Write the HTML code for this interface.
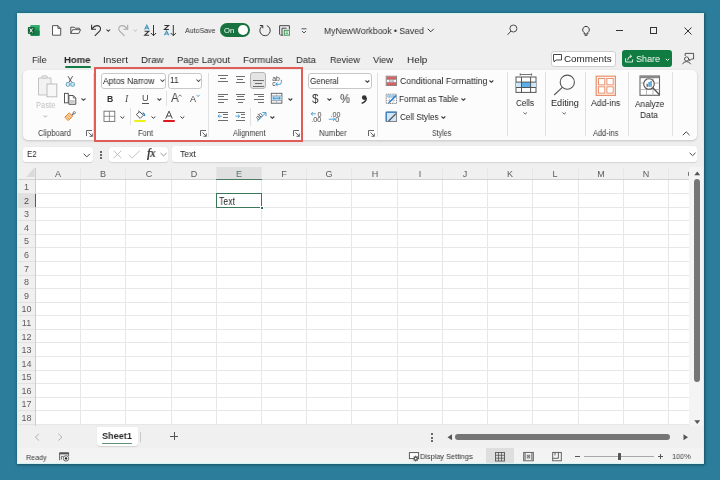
<!DOCTYPE html>
<html><head><meta charset="utf-8"><style>
html,body{margin:0;padding:0;}
body{width:720px;height:480px;overflow:hidden;position:relative;background:#2c7c9b;font-family:"Liberation Sans",sans-serif;}
.a{position:absolute;}
.t{line-height:1;white-space:nowrap;will-change:transform;}
svg{overflow:visible;will-change:transform;}
</style></head><body>
<div class="a" style="left:17.00px;top:13.00px;width:687.00px;height:450.50px;background:#efefef;box-shadow:0.5px 0.5px 2.5px 0.5px rgba(10,45,45,.55);"></div>
<div class="a" style="left:17.00px;top:13.00px;width:687.00px;height:450.50px;box-shadow: inset 0 0 0 1px #d4f3f0;background:transparent;z-index:5;"></div>
<svg class="a" style="left:25px;top:22px" width="20" height="18" viewBox="25 22 20 18"><rect x="30.5" y="24.9" width="9.1" height="10.9" rx="1" fill="#1f9a58"/><rect x="30.5" y="30.4" width="9.1" height="5.4" rx="0.5" fill="#138048"/><rect x="30.5" y="24.9" width="9.1" height="2.6" rx="1" fill="#33b070"/><rect x="27.9" y="27" width="6.6" height="6.9" rx="0.8" fill="#17633a"/><path d="M29.7 28.4 L32.6 32.5 M32.6 28.4 L29.7 32.5" stroke="#fff" stroke-width="0.95"/></svg>
<svg class="a" style="left:45px;top:22px" width="43" height="18" viewBox="45 22 43 18"><path d="M52.5 25.6 H57.9 L60.7 28.4 V35.2 H52.5 Z M57.9 25.6 V28.4 H60.7" fill="#fff" stroke="#444" stroke-width="0.9" stroke-linejoin="round"/></svg>
<svg class="a" style="left:45px;top:22px" width="43" height="18" viewBox="45 22 43 18"><path d="M70.8 33.4 V27.2 H74.2 L75.2 28.2 H79.4 V29.6" fill="none" stroke="#444" stroke-width="0.9" stroke-linejoin="round"/><path d="M70.8 33.4 L72.6 29.7 H80.6 L78.8 33.4 Z" fill="#fff" stroke="#444" stroke-width="0.9" stroke-linejoin="round"/></svg>
<svg class="a" style="left:88px;top:22px" width="52" height="18" viewBox="88 22 52 18"><path d="M91.6 24.8 V29.3 H96" fill="none" stroke="#333" stroke-width="1.1"/><path d="M91.9 28.9 Q95.5 24.3 99.3 26.2 Q101.6 28.6 99.6 31.2 L94.8 35.8" fill="none" stroke="#333" stroke-width="1.1"/></svg>
<svg class="a" style="left:105.70px;top:28.60px" width="4.6" height="2.8" viewBox="0 0 4.6 2.8"><path d="M0.5 0.5 L2.3 2.3 L4.1 0.5" fill="none" stroke="#333" stroke-width="1.05"/></svg>
<svg class="a" style="left:88px;top:22px" width="52" height="18" viewBox="88 22 52 18"><path d="M127.7 24.8 V29.3 H123.3" fill="none" stroke="#aaa" stroke-width="1.1"/><path d="M127.4 28.9 Q123.8 24.3 120 26.2 Q117.7 28.6 119.7 31.2 L124.5 35.8" fill="none" stroke="#aaa" stroke-width="1.1"/></svg>
<svg class="a" style="left:132.50px;top:28.60px" width="4.5" height="2.8" viewBox="0 0 4.5 2.8"><path d="M0.5 0.5 L2.25 2.3 L4.0 0.5" fill="none" stroke="#ccc" stroke-width="1.05"/></svg>
<svg class="a" style="left:140px;top:20px" width="40" height="20" viewBox="140 20 40 20"><path d="M144.6 29.5 L146.8 25.1 L149.0 29.5 M145.4 28.1 H148.20000000000002" fill="none" stroke="#3f95bd" stroke-width="1.05"/><path d="M144.6 31.2 H148.9 L144.6 35.3 H149.1" fill="none" stroke="#333" stroke-width="1.05"/><path d="M153.5 25 V35.6 M150.9 33 L153.5 35.7 L156.1 33" fill="none" stroke="#333" stroke-width="1"/></svg>
<svg class="a" style="left:140px;top:20px" width="40" height="20" viewBox="140 20 40 20"><path d="M164.39999999999998 35.3 L166.6 30.9 L168.79999999999998 35.3 M165.2 33.9 H168.0" fill="none" stroke="#3f95bd" stroke-width="1.05"/><path d="M164.39999999999998 25.400000000000002 H168.7 L164.39999999999998 29.5 H168.89999999999998" fill="none" stroke="#333" stroke-width="1.05"/><path d="M173.29999999999998 25 V35.6 M170.7 33 L173.29999999999998 35.7 L175.89999999999998 33" fill="none" stroke="#333" stroke-width="1"/></svg>
<div class="a t" style="left:184.90px;top:27.47px;font-size:7.74px;color:#333;font-weight:normal;transform:scaleX(0.9097);transform-origin:0 0;">AutoSave</div>
<div class="a" style="left:219.80px;top:23.10px;width:30.00px;height:13.70px;background:#17723f;border-radius:7px;"></div>
<div class="a t" style="left:224.37px;top:27.02px;font-size:7.63px;color:#fff;font-weight:normal;transform:scaleX(0.9680);transform-origin:0 0;">On</div>
<div class="a" style="left:238.00px;top:25.30px;width:9.90px;height:9.90px;background:#fff;border-radius:50%;"></div>
<svg class="a" style="left:255px;top:22px" width="20" height="18" viewBox="255 22 20 18"><path d="M262.6 25.9 A5.2 5.2 0 1 0 266.8 25.6" fill="none" stroke="#3a3a3a" stroke-width="1"/><path d="M259.8 25.5 H262.8 V28.3" fill="none" stroke="#3a3a3a" stroke-width="1"/></svg>
<svg class="a" style="left:275px;top:22px" width="20" height="18" viewBox="275 22 20 18"><path d="M279.6 25.7 H289.4 V29.5 M279.6 25.7 V34.2 L280.6 35.2 H283.2 M282 35 V28.2 H286.6" fill="none" stroke="#444" stroke-width="1"/><rect x="284.3" y="30.3" width="5.1" height="4.9" fill="#e9f5ec" stroke="#3a9a55" stroke-width="1"/><path d="M285.6 32 H288 M285.6 33.6 H288" stroke="#3a9a55" stroke-width="0.8"/></svg>
<svg class="a" style="left:301.00px;top:28.00px" width="6" height="6" viewBox="0 0 6 6"><path d="M0.5 0.8 H5.5 M1 3 L3 5 L5 3" fill="none" stroke="#444" stroke-width="0.9"/></svg>
<div class="a t" style="left:323.71px;top:26.78px;font-size:9.33px;color:#303030;font-weight:normal;transform:scaleX(0.9264);transform-origin:0 0;">MyNewWorkbook &bull; Saved</div>
<svg class="a" style="left:427.00px;top:28.00px" width="8" height="5" viewBox="0 0 8 5"><path d="M0.8 0.8 L3.8 3.8 L6.8 0.8" fill="none" stroke="#333" stroke-width="1"/></svg>
<svg class="a" style="left:500px;top:20px" width="25" height="20" viewBox="500 20 25 20"><circle cx="513.4" cy="28.5" r="3.5" fill="none" stroke="#444" stroke-width="0.95"/><path d="M511 31 L507.6 34.8" stroke="#444" stroke-width="1"/></svg>
<svg class="a" style="left:582.00px;top:26.00px" width="8" height="10" viewBox="0 0 8 10"><path d="M2.2 6.5 A3.3 3.3 0 1 1 5.8 6.5 V8 H2.2 Z M2.7 9.3 H5.3" fill="none" stroke="#333" stroke-width="1"/></svg>
<div class="a" style="left:616.30px;top:30.00px;width:6.60px;height:1.00px;background:#333;"></div>
<div class="a" style="left:649.80px;top:27.00px;width:7.40px;height:7.20px;border:1px solid #333;box-sizing:border-box;"></div>
<svg class="a" style="left:683.50px;top:26.50px" width="8" height="8" viewBox="0 0 8 8"><path d="M0.5 0.5 L7.5 7.5 M7.5 0.5 L0.5 7.5" stroke="#333" stroke-width="1"/></svg>
<div class="a t" style="left:31.78px;top:54.92px;font-size:9.86px;color:#262626;font-weight:normal;transform:scaleX(0.9154);transform-origin:0 0;">File</div>
<div class="a t" style="left:64.38px;top:54.92px;font-size:9.86px;color:#262626;font-weight:bold;transform:scaleX(0.9708);transform-origin:0 0;">Home</div>
<div class="a t" style="left:102.90px;top:54.92px;font-size:9.86px;color:#262626;font-weight:normal;transform:scaleX(1.0123);transform-origin:0 0;">Insert</div>
<div class="a t" style="left:140.83px;top:54.92px;font-size:9.86px;color:#262626;font-weight:normal;transform:scaleX(0.9762);transform-origin:0 0;">Draw</div>
<div class="a t" style="left:176.54px;top:54.92px;font-size:9.86px;color:#262626;font-weight:normal;transform:scaleX(0.9594);transform-origin:0 0;">Page Layout</div>
<div class="a t" style="left:242.53px;top:54.92px;font-size:9.86px;color:#262626;font-weight:normal;transform:scaleX(0.9731);transform-origin:0 0;">Formulas</div>
<div class="a t" style="left:295.64px;top:54.92px;font-size:9.86px;color:#262626;font-weight:normal;transform:scaleX(0.9594);transform-origin:0 0;">Data</div>
<div class="a t" style="left:329.57px;top:54.92px;font-size:9.86px;color:#262626;font-weight:normal;transform:scaleX(0.9225);transform-origin:0 0;">Review</div>
<div class="a t" style="left:373.25px;top:54.92px;font-size:9.86px;color:#262626;font-weight:normal;transform:scaleX(0.9458);transform-origin:0 0;">View</div>
<div class="a t" style="left:406.71px;top:54.92px;font-size:9.86px;color:#262626;font-weight:normal;transform:scaleX(1.0065);transform-origin:0 0;">Help</div>
<div class="a" style="left:65.00px;top:65.80px;width:25.80px;height:1.80px;background:#107c41;border-radius:1px;"></div>
<div class="a" style="left:550.50px;top:50.80px;width:65.00px;height:16.00px;background:#fff;border:1px solid #d0d0d0;border-radius:3px;box-sizing:border-box;"></div>
<svg class="a" style="left:553.00px;top:54.00px" width="9" height="9" viewBox="0 0 9 9"><path d="M0.5 0.5 H8.5 V6 H3 L1 8 V6 H0.5 Z" fill="none" stroke="#333" stroke-width="0.9"/></svg>
<div class="a t" style="left:564.31px;top:53.72px;font-size:9.86px;color:#262626;font-weight:normal;transform:scaleX(0.9930);transform-origin:0 0;">Comments</div>
<div class="a" style="left:622.00px;top:50.20px;width:50.00px;height:16.50px;background:#107c41;border-radius:3px;"></div>
<svg class="a" style="left:620px;top:48px" width="80" height="22" viewBox="620 48 80 22"><path d="M625.6 58.2 V62 H632.6 V59.4" fill="none" stroke="#e6f2ea" stroke-width="0.95"/><path d="M627.6 60.2 Q627.8 56.6 631.4 56.2 M629.8 54.6 L631.6 56.2 L630 57.9" fill="none" stroke="#e6f2ea" stroke-width="0.95"/></svg>
<div class="a t" style="left:636.29px;top:53.72px;font-size:9.86px;color:#fff;font-weight:normal;transform:scaleX(0.9179);transform-origin:0 0;">Share</div>
<svg class="a" style="left:664.50px;top:57.60px" width="6" height="4" viewBox="0 0 6 4"><path d="M0.8 0.8 L2.5 2.5 L4.2 0.8" fill="none" stroke="#fff" stroke-width="0.9"/></svg>
<svg class="a" style="left:678px;top:50px" width="20" height="18" viewBox="678 50 20 18"><path d="M685.2 56 V53.4 H693.6 V59 H691.4 L689.6 60.8 V59" fill="none" stroke="#444" stroke-width="0.9"/><circle cx="686.6" cy="59" r="2.1" fill="#f0f0f0" stroke="#444" stroke-width="0.9"/><path d="M682.6 64.2 Q683.2 61.6 686.6 61.6 Q689.8 61.6 690.6 64.2" fill="none" stroke="#444" stroke-width="0.9"/></svg>
<div class="a" style="left:23.20px;top:70.00px;width:674.30px;height:69.80px;background:#fcfcfc;border-radius:5px;box-shadow:0 1px 2.5px rgba(0,0,0,.18);"></div>
<svg class="a" style="left:37.00px;top:75.00px" width="21" height="23" viewBox="0 0 21 23"><path d="M1.5 3 H5 V1.5 H10 V3 H14 V20 H1.5 Z" fill="#f2f2f2" stroke="#c4c4c4" stroke-width="1"/><rect x="5" y="0.8" width="5" height="2.6" rx="1" fill="#e8e8e8" stroke="#c4c4c4" stroke-width="0.9"/><rect x="10" y="9" width="9.8" height="12.8" fill="#f7f7f7" stroke="#bdbdbd" stroke-width="1"/></svg>
<div class="a t" style="left:35.99px;top:101.09px;font-size:9.12px;color:#c2c2c2;font-weight:normal;transform:scaleX(0.8306);transform-origin:0 0;">Paste</div>
<svg class="a" style="left:42.90px;top:114.70px" width="4.6" height="2.6" viewBox="0 0 4.6 2.6"><path d="M0.5 0.5 L2.3 2.1 L4.1 0.5" fill="none" stroke="#c8c8c8" stroke-width="1.05"/></svg>
<svg class="a" style="left:60px;top:72px" width="30" height="52" viewBox="60 72 30 52"><path d="M68 76.2 L71.6 82.2 M72.6 76.2 L69 82.2" stroke="#555" stroke-width="1" fill="none"/><circle cx="68" cy="84.4" r="1.9" fill="#d7ebf2" stroke="#6aaac2" stroke-width="1.1"/><circle cx="72.6" cy="84.4" r="1.9" fill="#d7ebf2" stroke="#6aaac2" stroke-width="1.1"/></svg>
<svg class="a" style="left:60px;top:72px" width="30" height="52" viewBox="60 72 30 52"><rect x="64.5" y="93.4" width="3.8" height="9.4" fill="#fff" stroke="#555" stroke-width="1"/><path d="M68.9 95.5 H73.3 L75.8 98 V104.3 H68.9 Z" fill="#fff" stroke="#555" stroke-width="1"/><rect x="70" y="100" width="4.8" height="3.6" fill="#c9c9c9"/><path d="M73.3 95.5 V98 H75.8" fill="none" stroke="#555" stroke-width="0.8"/></svg>
<svg class="a" style="left:80.60px;top:97.60px" width="5" height="2.8" viewBox="0 0 5 2.8"><path d="M0.5 0.5 L2.5 2.3 L4.5 0.5" fill="none" stroke="#444" stroke-width="1.05"/></svg>
<svg class="a" style="left:60px;top:72px" width="30" height="52" viewBox="60 72 30 52"><path d="M71.5 115.5 L75 112" stroke="#666" stroke-width="1.2"/><circle cx="74.3" cy="112.7" r="1.1" fill="#fff" stroke="#666" stroke-width="0.8"/><path d="M64.8 117.2 L69.2 112.8 L72.6 116.2 L68.2 120.6 Z" fill="#fbd3a3" stroke="#e8862c" stroke-width="1"/><path d="M66.5 116.5 L69.5 119.5 M68 114.8 L71 117.8" stroke="#e8862c" stroke-width="0.7"/></svg>
<div class="a t" style="left:37.62px;top:130.21px;font-size:8.27px;color:#3a3a3a;font-weight:normal;transform:scaleX(0.9293);transform-origin:0 0;">Clipboard</div>
<svg class="a" style="left:86.20px;top:129.80px" width="7" height="7" viewBox="0 0 7 7"><path d="M0.5 6 V0.5 H6 M2.5 2.5 L6.3 6.3 M6.3 3.5 V6.3 H3.5" fill="none" stroke="#555" stroke-width="0.9"/></svg>
<div class="a" style="left:92.50px;top:73.00px;width:1.00px;height:64.00px;background:#e1e1e1;"></div>
<div class="a" style="left:101.30px;top:72.70px;width:65.00px;height:16.10px;background:#fff;border:1px solid #c8c8c8;border-radius:3px;box-sizing:border-box;"></div>
<div class="a t" style="left:103.30px;top:76.64px;font-size:8.80px;color:#262626;font-weight:normal;transform:scaleX(0.9641);transform-origin:0 0;">Aptos Narrow</div>
<svg class="a" style="left:160.00px;top:79.30px" width="5" height="3" viewBox="0 0 5 3"><path d="M0.5 0.5 L2.5 2.5 L4.5 0.5" fill="none" stroke="#444" stroke-width="1.05"/></svg>
<div class="a" style="left:168.30px;top:72.70px;width:34.20px;height:16.10px;background:#fff;border:1px solid #c8c8c8;border-radius:3px;box-sizing:border-box;"></div>
<div class="a t" style="left:169.80px;top:76.24px;font-size:8.80px;color:#262626;font-weight:normal;transform:scaleX(0.9434);transform-origin:0 0;">11</div>
<svg class="a" style="left:196.10px;top:79.30px" width="5" height="3" viewBox="0 0 5 3"><path d="M0.5 0.5 L2.5 2.5 L4.5 0.5" fill="none" stroke="#444" stroke-width="1.05"/></svg>
<div class="a t" style="left:106.80px;top:94.50px;font-size:8.69px;color:#333;font-weight:bold;transform:scaleX(0.9434);transform-origin:0 0;">B</div>
<div class="a t" style="left:124.60px;top:93.77px;font-size:9.75px;color:#444;font-weight:normal;transform:scaleX(0.9434);transform-origin:0 0;font-family:Liberation Serif,serif;font-style:italic;">I</div>
<div class="a t" style="left:142.20px;top:93.89px;font-size:9.12px;color:#444;font-weight:normal;transform:scaleX(0.9434);transform-origin:0 0;">U</div>
<div class="a" style="left:142.00px;top:102.70px;width:6.80px;height:0.90px;background:#555;"></div>
<svg class="a" style="left:156.80px;top:97.80px" width="4.8" height="2.8" viewBox="0 0 4.8 2.8"><path d="M0.5 0.5 L2.4 2.3 L4.3 0.5" fill="none" stroke="#444" stroke-width="1.05"/></svg>
<div class="a" style="left:166.20px;top:91.00px;width:1.00px;height:15.30px;background:#e1e1e1;"></div>
<div class="a t" style="left:170.60px;top:92.21px;font-size:12.30px;color:#4a4a4a;font-weight:normal;transform:scaleX(0.9434);transform-origin:0 0;">A</div>
<svg class="a" style="left:178.20px;top:93.60px" width="5" height="3.5" viewBox="0 0 5 3.5"><path d="M0.5 2.6 L2.1 0.8 L3.7 2.6" fill="none" stroke="#666" stroke-width="0.8"/></svg>
<div class="a t" style="left:189.90px;top:94.99px;font-size:9.12px;color:#4a4a4a;font-weight:normal;transform:scaleX(0.9434);transform-origin:0 0;">A</div>
<svg class="a" style="left:196.20px;top:93.60px" width="5" height="3.5" viewBox="0 0 5 3.5"><path d="M0.5 0.8 L2.1 2.6 L3.7 0.8" fill="none" stroke="#3a8ec8" stroke-width="0.8"/></svg>
<svg class="a" style="left:100px;top:106px" width="90" height="20" viewBox="100 106 90 20"><rect x="104" y="111.2" width="10.8" height="10.2" fill="#fff" stroke="#666" stroke-width="0.85"/><path d="M109.4 111.2 V121.4 M104 116.3 H114.8" stroke="#777" stroke-width="0.8"/></svg>
<svg class="a" style="left:120.30px;top:115.60px" width="4.8" height="2.8" viewBox="0 0 4.8 2.8"><path d="M0.5 0.5 L2.4 2.3 L4.3 0.5" fill="none" stroke="#333" stroke-width="1"/></svg>
<div class="a" style="left:130.30px;top:108.00px;width:1.00px;height:17.00px;background:#e1e1e1;"></div>
<svg class="a" style="left:100px;top:106px" width="90" height="20" viewBox="100 106 90 20"><path d="M136.3 114.6 L139.6 111.6 L143.4 115.2 L140.2 118.4 Z" fill="#fff" stroke="#444" stroke-width="0.9"/><path d="M138.2 110.8 L139.6 112.1" stroke="#444" stroke-width="0.9"/><path d="M142.6 112.8 Q144.6 113.3 144.6 116" fill="none" stroke="#2f7fc8" stroke-width="1.2"/></svg>
<div class="a" style="left:133.80px;top:119.75px;width:12.40px;height:2.60px;background:#eef01a;border-radius:1px;"></div>
<svg class="a" style="left:150.70px;top:115.60px" width="4.8" height="2.8" viewBox="0 0 4.8 2.8"><path d="M0.5 0.5 L2.4 2.3 L4.3 0.5" fill="none" stroke="#333" stroke-width="1"/></svg>
<svg class="a" style="left:100px;top:106px" width="90" height="20" viewBox="100 106 90 20"><path d="M165.7 118.6 L169 111.1 L172.3 118.6 M166.8 116 H171.2" fill="none" stroke="#444" stroke-width="0.95"/></svg>
<div class="a" style="left:163.10px;top:119.75px;width:11.70px;height:2.60px;background:#dd1a22;border-radius:1px;"></div>
<svg class="a" style="left:179.70px;top:115.60px" width="4.8" height="2.8" viewBox="0 0 4.8 2.8"><path d="M0.5 0.5 L2.4 2.3 L4.3 0.5" fill="none" stroke="#333" stroke-width="1"/></svg>
<div class="a t" style="left:138.10px;top:130.21px;font-size:8.27px;color:#3a3a3a;font-weight:normal;transform:scaleX(0.9032);transform-origin:0 0;">Font</div>
<svg class="a" style="left:199.60px;top:129.60px" width="7" height="7" viewBox="0 0 7 7"><path d="M0.5 6 V0.5 H6 M2.5 2.5 L6.3 6.3 M6.3 3.5 V6.3 H3.5" fill="none" stroke="#555" stroke-width="0.9"/></svg>
<div class="a" style="left:208.00px;top:73.00px;width:1.00px;height:64.00px;background:#e1e1e1;"></div>
<div class="a" style="left:217.50px;top:75.00px;width:10.00px;height:1.00px;background:#6e6e6e;"></div>
<div class="a" style="left:219.50px;top:78.00px;width:6.00px;height:1.00px;background:#6e6e6e;"></div>
<div class="a" style="left:217.50px;top:81.00px;width:10.00px;height:1.00px;background:#6e6e6e;"></div>
<div class="a" style="left:235.50px;top:76.00px;width:9.80px;height:1.00px;background:#6e6e6e;"></div>
<div class="a" style="left:237.30px;top:79.00px;width:6.20px;height:1.00px;background:#6e6e6e;"></div>
<div class="a" style="left:235.50px;top:82.00px;width:9.80px;height:1.00px;background:#6e6e6e;"></div>
<div class="a" style="left:250.10px;top:72.30px;width:16.20px;height:16.30px;background:#e4e4e4;border:1px solid #b5b5b5;border-radius:3px;box-sizing:border-box;"></div>
<div class="a" style="left:253.30px;top:80.00px;width:10.50px;height:1.00px;background:#6e6e6e;"></div>
<div class="a" style="left:254.80px;top:82.70px;width:7.50px;height:1.00px;background:#6e6e6e;"></div>
<div class="a" style="left:253.30px;top:85.50px;width:10.50px;height:1.00px;background:#6e6e6e;"></div>
<svg class="a" style="left:268px;top:72px" width="32" height="18" viewBox="268 72 32 18"><text x="272.2" y="80.6" font-size="6.9" font-family="Liberation Sans" fill="#444">ab</text><text x="272.2" y="85.8" font-size="6.9" font-family="Liberation Sans" fill="#444">c</text><path d="M281.3 79.8 V82.6 Q281.3 84.3 279.6 84.3 H276 M277.6 82.6 L275.8 84.3 L277.6 86" fill="none" stroke="#3f9ad2" stroke-width="1"/></svg>
<div class="a" style="left:217.50px;top:93.50px;width:10.00px;height:1.00px;background:#6e6e6e;"></div>
<div class="a" style="left:217.50px;top:96.30px;width:6.50px;height:1.00px;background:#6e6e6e;"></div>
<div class="a" style="left:217.50px;top:99.00px;width:10.00px;height:1.00px;background:#6e6e6e;"></div>
<div class="a" style="left:217.50px;top:101.80px;width:6.00px;height:1.00px;background:#6e6e6e;"></div>
<div class="a" style="left:235.50px;top:93.50px;width:9.80px;height:1.00px;background:#6e6e6e;"></div>
<div class="a" style="left:237.10px;top:96.30px;width:6.60px;height:1.00px;background:#6e6e6e;"></div>
<div class="a" style="left:235.50px;top:99.00px;width:9.80px;height:1.00px;background:#6e6e6e;"></div>
<div class="a" style="left:237.50px;top:101.80px;width:5.80px;height:1.00px;background:#6e6e6e;"></div>
<div class="a" style="left:253.80px;top:93.50px;width:10.00px;height:1.00px;background:#6e6e6e;"></div>
<div class="a" style="left:257.60px;top:96.30px;width:6.20px;height:1.00px;background:#6e6e6e;"></div>
<div class="a" style="left:253.80px;top:99.00px;width:10.00px;height:1.00px;background:#6e6e6e;"></div>
<div class="a" style="left:258.00px;top:101.80px;width:5.80px;height:1.00px;background:#6e6e6e;"></div>
<svg class="a" style="left:268px;top:90px" width="32" height="16" viewBox="268 90 32 16"><rect x="271.3" y="93.3" width="10.6" height="9.9" fill="#f4f9fd" stroke="#5a5a5a" stroke-width="0.9"/><rect x="271.8" y="95.9" width="9.6" height="4.7" fill="#bfe0f6"/><path d="M273 98.25 H280.2 M274.4 97 L273 98.25 L274.4 99.5 M278.8 97 L280.2 98.25 L278.8 99.5" fill="none" stroke="#2f8fd0" stroke-width="0.9"/><path d="M271.3 95.9 H281.9 M271.3 100.6 H281.9" stroke="#888" stroke-width="0.7"/><path d="M276.6 93.3 V95.9 M276.6 100.6 V103.2" stroke="#999" stroke-width="0.6"/></svg>
<svg class="a" style="left:287.60px;top:97.60px" width="4.8" height="2.8" viewBox="0 0 4.8 2.8"><path d="M0.5 0.5 L2.4 2.3 L4.3 0.5" fill="none" stroke="#333" stroke-width="1.05"/></svg>
<div class="a" style="left:217.50px;top:111.50px;width:10.00px;height:1.00px;background:#6e6e6e;"></div>
<div class="a" style="left:217.50px;top:120.00px;width:10.00px;height:1.00px;background:#6e6e6e;"></div>
<div class="a" style="left:222.50px;top:114.30px;width:5.00px;height:1.00px;background:#6e6e6e;"></div>
<div class="a" style="left:222.50px;top:117.20px;width:5.00px;height:1.00px;background:#6e6e6e;"></div>
<svg class="a" style="left:212px;top:108px" width="38" height="16" viewBox="212 108 38 16"><path d="M222 116.2 H218 M219.6 114.6 L217.9 116.2 L219.6 117.8" fill="none" stroke="#3f9ad2" stroke-width="0.9"/><path d="M235.5 116.2 H239.6 M238 114.6 L239.7 116.2 L238 117.8" fill="none" stroke="#3f9ad2" stroke-width="0.9"/></svg>
<div class="a" style="left:235.50px;top:111.50px;width:9.80px;height:1.00px;background:#6e6e6e;"></div>
<div class="a" style="left:235.50px;top:120.00px;width:9.80px;height:1.00px;background:#6e6e6e;"></div>
<div class="a" style="left:240.50px;top:114.30px;width:4.80px;height:1.00px;background:#6e6e6e;"></div>
<div class="a" style="left:240.50px;top:117.20px;width:4.80px;height:1.00px;background:#6e6e6e;"></div>
<div class="a" style="left:250.40px;top:108.00px;width:1.00px;height:17.60px;background:#e1e1e1;"></div>
<svg class="a" style="left:250px;top:106px" width="20" height="18" viewBox="250 106 20 18"><text x="254.8" y="119.3" font-size="6.8" font-family="Liberation Sans" fill="#444" transform="rotate(-48 258 116)">ab</text><path d="M257.2 121.3 L265.8 112.8 M262.4 112.6 H266 V116.2" fill="none" stroke="#3f9ad2" stroke-width="1"/></svg>
<svg class="a" style="left:270.30px;top:115.60px" width="4.8" height="2.8" viewBox="0 0 4.8 2.8"><path d="M0.5 0.5 L2.4 2.3 L4.3 0.5" fill="none" stroke="#333" stroke-width="1.05"/></svg>
<div class="a t" style="left:232.50px;top:130.21px;font-size:8.27px;color:#3a3a3a;font-weight:normal;transform:scaleX(0.8853);transform-origin:0 0;">Alignment</div>
<svg class="a" style="left:292.80px;top:129.60px" width="7" height="7" viewBox="0 0 7 7"><path d="M0.5 6 V0.5 H6 M2.5 2.5 L6.3 6.3 M6.3 3.5 V6.3 H3.5" fill="none" stroke="#555" stroke-width="0.9"/></svg>
<div class="a" style="left:308.30px;top:72.90px;width:63.60px;height:15.90px;background:#fff;border:1px solid #c8c8c8;border-radius:3px;box-sizing:border-box;"></div>
<div class="a t" style="left:309.50px;top:76.85px;font-size:8.59px;color:#262626;font-weight:normal;transform:scaleX(0.9378);transform-origin:0 0;">General</div>
<svg class="a" style="left:364.70px;top:79.70px" width="4.8" height="2.8" viewBox="0 0 4.8 2.8"><path d="M0.5 0.5 L2.4 2.3 L4.3 0.5" fill="none" stroke="#333" stroke-width="1.05"/></svg>
<div class="a t" style="left:312.40px;top:93.52px;font-size:11.87px;color:#3a3a3a;font-weight:normal;transform:scaleX(0.9434);transform-origin:0 0;">$</div>
<svg class="a" style="left:326.90px;top:97.80px" width="4.8" height="2.8" viewBox="0 0 4.8 2.8"><path d="M0.5 0.5 L2.4 2.3 L4.3 0.5" fill="none" stroke="#333" stroke-width="1.05"/></svg>
<div class="a t" style="left:339.50px;top:93.12px;font-size:12.08px;color:#3a3a3a;font-weight:normal;transform:scaleX(0.9434);transform-origin:0 0;">%</div>
<svg class="a" style="left:355px;top:90px" width="17" height="16" viewBox="355 90 17 16"><circle cx="364.2" cy="97.6" r="2.3" fill="#333"/><path d="M366.3 97.8 Q366.6 101.6 361.6 103.3" fill="none" stroke="#333" stroke-width="1.4"/></svg>
<svg class="a" style="left:305px;top:106px" width="40" height="20" viewBox="305 106 40 20"><path d="M315.8 113.8 H311.2 M312.9 112.1 L311.1 113.8 L312.9 115.5" fill="none" stroke="#3f9ad2" stroke-width="0.9"/><text x="317.4" y="116.6" font-size="7.2" font-family="Liberation Sans" fill="#444">0</text><text x="311.2" y="121.9" font-size="7.2" font-family="Liberation Sans" fill="#444">.00</text><text x="330.6" y="116.6" font-size="7.2" font-family="Liberation Sans" fill="#444">.00</text><path d="M328.8 119.2 H334.8 M333.1 117.5 L334.9 119.2 L333.1 120.9" fill="none" stroke="#3f9ad2" stroke-width="0.9"/><text x="335.3" y="121.9" font-size="7.2" font-family="Liberation Sans" fill="#444">0</text></svg>
<div class="a t" style="left:319.38px;top:130.21px;font-size:8.27px;color:#3a3a3a;font-weight:normal;transform:scaleX(0.9438);transform-origin:0 0;">Number</div>
<svg class="a" style="left:368.00px;top:129.60px" width="7" height="7" viewBox="0 0 7 7"><path d="M0.5 6 V0.5 H6 M2.5 2.5 L6.3 6.3 M6.3 3.5 V6.3 H3.5" fill="none" stroke="#555" stroke-width="0.9"/></svg>
<div class="a" style="left:376.50px;top:73.00px;width:1.00px;height:64.00px;background:#e1e1e1;"></div>
<svg class="a" style="left:380px;top:70px" width="20" height="56" viewBox="380 70 20 56"><rect x="386.2" y="76.2" width="10.4" height="9.3" fill="#fff" stroke="#7a7a7a" stroke-width="0.9"/><rect x="386.7" y="76.7" width="9.4" height="2.8" fill="#e25a5a"/><rect x="386.7" y="82.3" width="9.4" height="2.8" fill="#e25a5a"/><rect x="389.6" y="79.5" width="3.6" height="2.8" fill="#c9d6e3"/><path d="M389.6 76.2 V85.5 M393.2 76.2 V85.5 M386.2 79.5 H396.6 M386.2 82.3 H396.6" stroke="#8a8a8a" stroke-width="0.6"/></svg>
<div class="a t" style="left:399.57px;top:76.69px;font-size:9.12px;color:#262626;font-weight:normal;transform:scaleX(0.9541);transform-origin:0 0;">Conditional Formatting</div>
<svg class="a" style="left:489.00px;top:79.80px" width="4.8" height="2.8" viewBox="0 0 4.8 2.8"><path d="M0.5 0.5 L2.4 2.3 L4.3 0.5" fill="none" stroke="#333" stroke-width="1.05"/></svg>
<svg class="a" style="left:380px;top:70px" width="20" height="56" viewBox="380 70 20 56"><rect x="386.2" y="94.2" width="10.4" height="9.3" fill="#fff" stroke="#7a7a7a" stroke-width="0.9" stroke-dasharray="1.2 0.6"/><rect x="386.7" y="94.7" width="9.4" height="2.6" fill="#a9d3f2"/><path d="M389.6 94.2 V103.5 M393.2 94.2 V103.5 M386.2 97.3 H396.6 M386.2 100.4 H396.6" stroke="#9a9a9a" stroke-width="0.6" stroke-dasharray="1 0.6"/><path d="M388.6 103 L396 95.6" stroke="#2f7fc8" stroke-width="1.5"/></svg>
<div class="a t" style="left:399.33px;top:94.79px;font-size:9.12px;color:#262626;font-weight:normal;transform:scaleX(0.9119);transform-origin:0 0;">Format as Table</div>
<svg class="a" style="left:460.70px;top:97.80px" width="4.8" height="2.8" viewBox="0 0 4.8 2.8"><path d="M0.5 0.5 L2.4 2.3 L4.3 0.5" fill="none" stroke="#333" stroke-width="1.05"/></svg>
<svg class="a" style="left:380px;top:70px" width="20" height="56" viewBox="380 70 20 56"><rect x="386.2" y="112.2" width="10.4" height="9.3" fill="#cfe6f8" stroke="#7a7a7a" stroke-width="0.9"/><path d="M386.2 112.2 H396.6 M386.2 112.2 V121.5" stroke="#2f7fc8" stroke-width="1.2"/><path d="M388.6 121 L396 113.6" stroke="#555" stroke-width="1.3"/></svg>
<div class="a t" style="left:399.59px;top:112.89px;font-size:9.12px;color:#262626;font-weight:normal;transform:scaleX(0.8937);transform-origin:0 0;">Cell Styles</div>
<svg class="a" style="left:440.70px;top:116.00px" width="4.8" height="2.8" viewBox="0 0 4.8 2.8"><path d="M0.5 0.5 L2.4 2.3 L4.3 0.5" fill="none" stroke="#333" stroke-width="1.05"/></svg>
<div class="a t" style="left:431.58px;top:130.21px;font-size:8.27px;color:#3a3a3a;font-weight:normal;transform:scaleX(0.8505);transform-origin:0 0;">Styles</div>
<div class="a" style="left:506.50px;top:72.00px;width:1.00px;height:64.00px;background:#e1e1e1;"></div>
<svg class="a" style="left:515.00px;top:73.00px" width="22" height="20" viewBox="0 0 22 20"><path d="M5.2 1.5 H16.6 M5.2 0.3 V2.7 M16.6 0.3 V2.7" stroke="#555" stroke-width="0.8" fill="none"/><rect x="1" y="4" width="20" height="15.4" fill="#fff" stroke="#555" stroke-width="1"/><rect x="1" y="9.1" width="20" height="5.4" fill="#cfe6f7"/><rect x="6.5" y="9.1" width="9" height="5.4" fill="#5ab0ee"/><path d="M6.5 4 V19.4 M15.6 4 V19.4 M1 9.1 H21 M1 14.5 H21" stroke="#555" stroke-width="1"/></svg>
<div class="a t" style="left:516.30px;top:98.69px;font-size:9.12px;color:#262626;font-weight:normal;transform:scaleX(0.8868);transform-origin:0 0;">Cells</div>
<svg class="a" style="left:523.10px;top:112.30px" width="4.4" height="2.6" viewBox="0 0 4.4 2.6"><path d="M0.5 0.5 L2.2 2.1 L3.9 0.5" fill="none" stroke="#555" stroke-width="0.95"/></svg>
<div class="a" style="left:545.30px;top:72.00px;width:1.00px;height:64.00px;background:#e1e1e1;"></div>
<svg class="a" style="left:553.00px;top:74.00px" width="23" height="22" viewBox="0 0 23 22"><circle cx="14.3" cy="8.2" r="7.1" fill="none" stroke="#555" stroke-width="1.1"/><path d="M9.3 13.3 L1.2 21" stroke="#555" stroke-width="1.1"/></svg>
<div class="a t" style="left:550.58px;top:98.79px;font-size:9.12px;color:#262626;font-weight:normal;transform:scaleX(0.9877);transform-origin:0 0;">Editing</div>
<svg class="a" style="left:561.90px;top:112.30px" width="4.4" height="2.6" viewBox="0 0 4.4 2.6"><path d="M0.5 0.5 L2.2 2.1 L3.9 0.5" fill="none" stroke="#555" stroke-width="0.95"/></svg>
<div class="a" style="left:584.70px;top:72.00px;width:1.00px;height:64.00px;background:#e1e1e1;"></div>
<svg class="a" style="left:595.00px;top:75.00px" width="22" height="22" viewBox="0 0 22 22"><rect x="1.2" y="1.2" width="19.2" height="19.2" fill="#fdf3ee" stroke="#e8906a" stroke-width="1.2"/><rect x="3.5" y="3.5" width="6.3" height="6.3" fill="#fff" stroke="#e8906a" stroke-width="0.95"/><rect x="11.9" y="3.5" width="6.3" height="6.3" fill="#fff" stroke="#e8906a" stroke-width="0.95"/><rect x="3.5" y="11.8" width="6.3" height="6.3" fill="#fff" stroke="#e8906a" stroke-width="0.95"/><rect x="11.9" y="11.8" width="6.3" height="6.3" fill="#fff" stroke="#e8906a" stroke-width="0.95"/></svg>
<div class="a t" style="left:591.30px;top:99.29px;font-size:9.12px;color:#262626;font-weight:normal;transform:scaleX(0.9482);transform-origin:0 0;">Add-ins</div>
<div class="a t" style="left:593.00px;top:130.21px;font-size:8.27px;color:#3a3a3a;font-weight:normal;transform:scaleX(0.9013);transform-origin:0 0;">Add-ins</div>
<div class="a" style="left:627.50px;top:72.00px;width:1.00px;height:64.00px;background:#e1e1e1;"></div>
<svg class="a" style="left:638.50px;top:75.00px" width="22" height="22" viewBox="0 0 22 22"><rect x="1" y="1" width="19.5" height="19.3" fill="#fff" stroke="#666" stroke-width="1.1"/><rect x="1" y="1" width="19.5" height="2.2" fill="#888"/><path d="M1 8 H20.5 M1 14.5 H20.5 M7.5 3 V20.3 M14 3 V20.3" stroke="#aaa" stroke-width="0.8"/><circle cx="10" cy="9" r="5.3" fill="#fff" stroke="#555" stroke-width="1.1"/><rect x="7.5" y="8.8" width="1.4" height="3" fill="#666"/><rect x="9.4" y="7" width="1.4" height="4.8" fill="#3a8ec8"/><rect x="11.3" y="6" width="1.4" height="5.8" fill="#3a8ec8"/><path d="M13.8 12.8 L20.5 19.8" stroke="#555" stroke-width="1.3"/></svg>
<div class="a t" style="left:635.00px;top:99.59px;font-size:9.12px;color:#262626;font-weight:normal;transform:scaleX(0.9032);transform-origin:0 0;">Analyze</div>
<div class="a t" style="left:640.12px;top:110.78px;font-size:9.33px;color:#262626;font-weight:normal;transform:scaleX(0.9083);transform-origin:0 0;">Data</div>
<div class="a" style="left:671.70px;top:72.00px;width:1.00px;height:64.00px;background:#e1e1e1;"></div>
<svg class="a" style="left:682.00px;top:130.50px" width="8.5" height="5" viewBox="0 0 8.5 5"><path d="M0.8 4.2 L4.2 0.8 L7.6 4.2" fill="none" stroke="#444" stroke-width="1"/></svg>
<div class="a" style="left:94.00px;top:67.00px;width:209.30px;height:75.00px;border:2.2px solid #e05c57;box-sizing:border-box;"></div>
<div class="a" style="left:23.20px;top:146.90px;width:70.00px;height:15.00px;background:#fff;border-radius:3px;box-shadow:0 0.5px 1px rgba(0,0,0,.12);"></div>
<div class="a t" style="left:26.77px;top:149.43px;font-size:9.43px;color:#262626;font-weight:normal;transform:scaleX(0.8363);transform-origin:0 0;">E2</div>
<svg class="a" style="left:82.80px;top:152.60px" width="8" height="5" viewBox="0 0 8 5"><path d="M0.7 0.8 L3.8 3.9 L6.9 0.8" fill="none" stroke="#444" stroke-width="1"/></svg>
<div class="a" style="left:100.40px;top:150.50px;width:2.00px;height:2.00px;background:#3a3a3a;border-radius:50%;"></div>
<div class="a" style="left:100.40px;top:153.60px;width:2.00px;height:2.00px;background:#3a3a3a;border-radius:50%;"></div>
<div class="a" style="left:100.40px;top:156.70px;width:2.00px;height:2.00px;background:#3a3a3a;border-radius:50%;"></div>
<div class="a" style="left:109.20px;top:147.00px;width:59.10px;height:14.70px;background:#fff;border-radius:3px;box-shadow:0 0.5px 1px rgba(0,0,0,.12);"></div>
<svg class="a" style="left:113.00px;top:150.00px" width="9.2" height="8.8" viewBox="0 0 9.2 8.8"><path d="M0.6 0.6 L8.4 8.2 M8.4 0.6 L0.6 8.2" stroke="#bbb" stroke-width="0.9"/></svg>
<svg class="a" style="left:128.00px;top:150.00px" width="12.5" height="9" viewBox="0 0 12.5 9"><path d="M0.6 4.8 L4 8.2 L11.8 0.6" fill="none" stroke="#bbb" stroke-width="0.9"/></svg>
<div class="a t" style="left:146.60px;top:148.42px;font-size:11.87px;color:#333;font-weight:bold;transform:scaleX(0.9434);transform-origin:0 0;font-family:Liberation Serif,serif;font-style:italic;letter-spacing:-0.6px;">fx</div>
<svg class="a" style="left:158px;top:150px" width="12" height="8" viewBox="158 150 12 8"><path d="M160.6 153.1 L163.6 155.9 L166.6 153.1" fill="none" stroke="#777" stroke-width="0.8"/></svg>
<div class="a" style="left:172.00px;top:146.30px;width:525.00px;height:15.70px;background:#fff;border-radius:3px;box-shadow:0 0.5px 1px rgba(0,0,0,.12);"></div>
<div class="a t" style="left:179.53px;top:149.84px;font-size:9.22px;color:#262626;font-weight:normal;transform:scaleX(0.9372);transform-origin:0 0;">Text</div>
<svg class="a" style="left:688.50px;top:152.30px" width="7.5" height="5" viewBox="0 0 7.5 5"><path d="M0.7 0.8 L3.6 3.7 L6.5 0.8" fill="none" stroke="#444" stroke-width="1"/></svg>
<div class="a" style="left:17.80px;top:166.50px;width:670.90px;height:13.45px;background:#f0f0f0;"></div>
<div class="a" style="left:17.80px;top:179.95px;width:17.70px;height:245.55px;background:#f0f0f0;"></div>
<div class="a" style="left:35.50px;top:179.95px;width:653.20px;height:245.55px;background:#fff;"></div>
<svg class="a" style="left:26.30px;top:167.20px" width="9" height="10.2" viewBox="0 0 9 10.2"><path d="M8.6 0.3 V9.9 H0.3 Z" fill="#dadada"/></svg>
<div class="a" style="left:216.34px;top:166.80px;width:45.21px;height:13.15px;background:#e0e0e0;"></div>
<div class="a" style="left:17.80px;top:193.53px;width:17.70px;height:13.58px;background:#e0e0e0;"></div>
<div class="a" style="left:80.21px;top:179.95px;width:1.00px;height:245.55px;background:#e7e7e7;"></div>
<div class="a" style="left:80.21px;top:168.50px;width:1.00px;height:11.45px;background:#e6e6e6;"></div>
<div class="a" style="left:125.42px;top:179.95px;width:1.00px;height:245.55px;background:#e7e7e7;"></div>
<div class="a" style="left:125.42px;top:168.50px;width:1.00px;height:11.45px;background:#e6e6e6;"></div>
<div class="a" style="left:170.63px;top:179.95px;width:1.00px;height:245.55px;background:#e7e7e7;"></div>
<div class="a" style="left:170.63px;top:168.50px;width:1.00px;height:11.45px;background:#e6e6e6;"></div>
<div class="a" style="left:215.84px;top:179.95px;width:1.00px;height:245.55px;background:#e7e7e7;"></div>
<div class="a" style="left:215.84px;top:168.50px;width:1.00px;height:11.45px;background:#e6e6e6;"></div>
<div class="a" style="left:261.05px;top:179.95px;width:1.00px;height:245.55px;background:#e7e7e7;"></div>
<div class="a" style="left:261.05px;top:168.50px;width:1.00px;height:11.45px;background:#e6e6e6;"></div>
<div class="a" style="left:306.26px;top:179.95px;width:1.00px;height:245.55px;background:#e7e7e7;"></div>
<div class="a" style="left:306.26px;top:168.50px;width:1.00px;height:11.45px;background:#e6e6e6;"></div>
<div class="a" style="left:351.47px;top:179.95px;width:1.00px;height:245.55px;background:#e7e7e7;"></div>
<div class="a" style="left:351.47px;top:168.50px;width:1.00px;height:11.45px;background:#e6e6e6;"></div>
<div class="a" style="left:396.68px;top:179.95px;width:1.00px;height:245.55px;background:#e7e7e7;"></div>
<div class="a" style="left:396.68px;top:168.50px;width:1.00px;height:11.45px;background:#e6e6e6;"></div>
<div class="a" style="left:441.89px;top:179.95px;width:1.00px;height:245.55px;background:#e7e7e7;"></div>
<div class="a" style="left:441.89px;top:168.50px;width:1.00px;height:11.45px;background:#e6e6e6;"></div>
<div class="a" style="left:487.10px;top:179.95px;width:1.00px;height:245.55px;background:#e7e7e7;"></div>
<div class="a" style="left:487.10px;top:168.50px;width:1.00px;height:11.45px;background:#e6e6e6;"></div>
<div class="a" style="left:532.31px;top:179.95px;width:1.00px;height:245.55px;background:#e7e7e7;"></div>
<div class="a" style="left:532.31px;top:168.50px;width:1.00px;height:11.45px;background:#e6e6e6;"></div>
<div class="a" style="left:577.52px;top:179.95px;width:1.00px;height:245.55px;background:#e7e7e7;"></div>
<div class="a" style="left:577.52px;top:168.50px;width:1.00px;height:11.45px;background:#e6e6e6;"></div>
<div class="a" style="left:622.73px;top:179.95px;width:1.00px;height:245.55px;background:#e7e7e7;"></div>
<div class="a" style="left:622.73px;top:168.50px;width:1.00px;height:11.45px;background:#e6e6e6;"></div>
<div class="a" style="left:667.94px;top:179.95px;width:1.00px;height:245.55px;background:#e7e7e7;"></div>
<div class="a" style="left:667.94px;top:168.50px;width:1.00px;height:11.45px;background:#e6e6e6;"></div>
<div class="a" style="left:35.50px;top:193.03px;width:653.20px;height:1.00px;background:#e7e7e7;"></div>
<div class="a" style="left:17.80px;top:193.03px;width:17.70px;height:1.00px;background:#e2e2e2;"></div>
<div class="a" style="left:35.50px;top:206.61px;width:653.20px;height:1.00px;background:#e7e7e7;"></div>
<div class="a" style="left:17.80px;top:206.61px;width:17.70px;height:1.00px;background:#e2e2e2;"></div>
<div class="a" style="left:35.50px;top:220.19px;width:653.20px;height:1.00px;background:#e7e7e7;"></div>
<div class="a" style="left:17.80px;top:220.19px;width:17.70px;height:1.00px;background:#e2e2e2;"></div>
<div class="a" style="left:35.50px;top:233.77px;width:653.20px;height:1.00px;background:#e7e7e7;"></div>
<div class="a" style="left:17.80px;top:233.77px;width:17.70px;height:1.00px;background:#e2e2e2;"></div>
<div class="a" style="left:35.50px;top:247.35px;width:653.20px;height:1.00px;background:#e7e7e7;"></div>
<div class="a" style="left:17.80px;top:247.35px;width:17.70px;height:1.00px;background:#e2e2e2;"></div>
<div class="a" style="left:35.50px;top:260.93px;width:653.20px;height:1.00px;background:#e7e7e7;"></div>
<div class="a" style="left:17.80px;top:260.93px;width:17.70px;height:1.00px;background:#e2e2e2;"></div>
<div class="a" style="left:35.50px;top:274.51px;width:653.20px;height:1.00px;background:#e7e7e7;"></div>
<div class="a" style="left:17.80px;top:274.51px;width:17.70px;height:1.00px;background:#e2e2e2;"></div>
<div class="a" style="left:35.50px;top:288.09px;width:653.20px;height:1.00px;background:#e7e7e7;"></div>
<div class="a" style="left:17.80px;top:288.09px;width:17.70px;height:1.00px;background:#e2e2e2;"></div>
<div class="a" style="left:35.50px;top:301.67px;width:653.20px;height:1.00px;background:#e7e7e7;"></div>
<div class="a" style="left:17.80px;top:301.67px;width:17.70px;height:1.00px;background:#e2e2e2;"></div>
<div class="a" style="left:35.50px;top:315.25px;width:653.20px;height:1.00px;background:#e7e7e7;"></div>
<div class="a" style="left:17.80px;top:315.25px;width:17.70px;height:1.00px;background:#e2e2e2;"></div>
<div class="a" style="left:35.50px;top:328.83px;width:653.20px;height:1.00px;background:#e7e7e7;"></div>
<div class="a" style="left:17.80px;top:328.83px;width:17.70px;height:1.00px;background:#e2e2e2;"></div>
<div class="a" style="left:35.50px;top:342.41px;width:653.20px;height:1.00px;background:#e7e7e7;"></div>
<div class="a" style="left:17.80px;top:342.41px;width:17.70px;height:1.00px;background:#e2e2e2;"></div>
<div class="a" style="left:35.50px;top:355.99px;width:653.20px;height:1.00px;background:#e7e7e7;"></div>
<div class="a" style="left:17.80px;top:355.99px;width:17.70px;height:1.00px;background:#e2e2e2;"></div>
<div class="a" style="left:35.50px;top:369.57px;width:653.20px;height:1.00px;background:#e7e7e7;"></div>
<div class="a" style="left:17.80px;top:369.57px;width:17.70px;height:1.00px;background:#e2e2e2;"></div>
<div class="a" style="left:35.50px;top:383.15px;width:653.20px;height:1.00px;background:#e7e7e7;"></div>
<div class="a" style="left:17.80px;top:383.15px;width:17.70px;height:1.00px;background:#e2e2e2;"></div>
<div class="a" style="left:35.50px;top:396.73px;width:653.20px;height:1.00px;background:#e7e7e7;"></div>
<div class="a" style="left:17.80px;top:396.73px;width:17.70px;height:1.00px;background:#e2e2e2;"></div>
<div class="a" style="left:35.50px;top:410.31px;width:653.20px;height:1.00px;background:#e7e7e7;"></div>
<div class="a" style="left:17.80px;top:410.31px;width:17.70px;height:1.00px;background:#e2e2e2;"></div>
<div class="a" style="left:35.50px;top:423.89px;width:653.20px;height:1.00px;background:#e7e7e7;"></div>
<div class="a" style="left:17.80px;top:423.89px;width:17.70px;height:1.00px;background:#e2e2e2;"></div>
<div class="a" style="left:17.80px;top:179.25px;width:670.90px;height:1.20px;background:#d2d2d2;"></div>
<div class="a" style="left:34.80px;top:167.50px;width:1.20px;height:258.00px;background:#cdcdcd;"></div>
<div class="a t" style="left:38.11px;top:169.80px;width:40px;text-align:center;font-size:9px;color:#5c5c5c;">A</div>
<div class="a t" style="left:83.31px;top:169.80px;width:40px;text-align:center;font-size:9px;color:#5c5c5c;">B</div>
<div class="a t" style="left:128.53px;top:169.80px;width:40px;text-align:center;font-size:9px;color:#5c5c5c;">C</div>
<div class="a t" style="left:173.74px;top:169.80px;width:40px;text-align:center;font-size:9px;color:#5c5c5c;">D</div>
<div class="a t" style="left:218.94px;top:169.80px;width:40px;text-align:center;font-size:9px;color:#4f7763;">E</div>
<div class="a t" style="left:264.15px;top:169.80px;width:40px;text-align:center;font-size:9px;color:#5c5c5c;">F</div>
<div class="a t" style="left:309.37px;top:169.80px;width:40px;text-align:center;font-size:9px;color:#5c5c5c;">G</div>
<div class="a t" style="left:354.57px;top:169.80px;width:40px;text-align:center;font-size:9px;color:#5c5c5c;">H</div>
<div class="a t" style="left:399.79px;top:169.80px;width:40px;text-align:center;font-size:9px;color:#5c5c5c;">I</div>
<div class="a t" style="left:445.00px;top:169.80px;width:40px;text-align:center;font-size:9px;color:#5c5c5c;">J</div>
<div class="a t" style="left:490.20px;top:169.80px;width:40px;text-align:center;font-size:9px;color:#5c5c5c;">K</div>
<div class="a t" style="left:535.41px;top:169.80px;width:40px;text-align:center;font-size:9px;color:#5c5c5c;">L</div>
<div class="a t" style="left:580.62px;top:169.80px;width:40px;text-align:center;font-size:9px;color:#5c5c5c;">M</div>
<div class="a t" style="left:625.84px;top:169.80px;width:40px;text-align:center;font-size:9px;color:#5c5c5c;">N</div>
<div class="a" style="left:668.44px;top:166.5px;width:20.26px;height:14px;overflow:hidden;"><div class="a t" style="left:2.61px;top:3.30px;width:40px;text-align:center;font-size:9px;color:#5c5c5c;">O</div></div>
<div class="a t" style="left:16.8px;top:183.14px;width:19px;text-align:center;font-size:9px;color:#5c5c5c;">1</div>
<div class="a t" style="left:16.8px;top:196.72px;width:19px;text-align:center;font-size:9px;color:#4a4a4a;">2</div>
<div class="a t" style="left:16.8px;top:210.30px;width:19px;text-align:center;font-size:9px;color:#5c5c5c;">3</div>
<div class="a t" style="left:16.8px;top:223.88px;width:19px;text-align:center;font-size:9px;color:#5c5c5c;">4</div>
<div class="a t" style="left:16.8px;top:237.46px;width:19px;text-align:center;font-size:9px;color:#5c5c5c;">5</div>
<div class="a t" style="left:16.8px;top:251.04px;width:19px;text-align:center;font-size:9px;color:#5c5c5c;">6</div>
<div class="a t" style="left:16.8px;top:264.62px;width:19px;text-align:center;font-size:9px;color:#5c5c5c;">7</div>
<div class="a t" style="left:16.8px;top:278.20px;width:19px;text-align:center;font-size:9px;color:#5c5c5c;">8</div>
<div class="a t" style="left:16.8px;top:291.78px;width:19px;text-align:center;font-size:9px;color:#5c5c5c;">9</div>
<div class="a t" style="left:16.8px;top:305.36px;width:19px;text-align:center;font-size:9px;color:#5c5c5c;">10</div>
<div class="a t" style="left:16.8px;top:318.94px;width:19px;text-align:center;font-size:9px;color:#5c5c5c;">11</div>
<div class="a t" style="left:16.8px;top:332.52px;width:19px;text-align:center;font-size:9px;color:#5c5c5c;">12</div>
<div class="a t" style="left:16.8px;top:346.10px;width:19px;text-align:center;font-size:9px;color:#5c5c5c;">13</div>
<div class="a t" style="left:16.8px;top:359.68px;width:19px;text-align:center;font-size:9px;color:#5c5c5c;">14</div>
<div class="a t" style="left:16.8px;top:373.26px;width:19px;text-align:center;font-size:9px;color:#5c5c5c;">15</div>
<div class="a t" style="left:16.8px;top:386.84px;width:19px;text-align:center;font-size:9px;color:#5c5c5c;">16</div>
<div class="a t" style="left:16.8px;top:400.42px;width:19px;text-align:center;font-size:9px;color:#5c5c5c;">17</div>
<div class="a t" style="left:16.8px;top:414.00px;width:19px;text-align:center;font-size:9px;color:#5c5c5c;">18</div>
<div class="a" style="left:216.34px;top:178.85px;width:45.21px;height:1.50px;background:#4a7f64;"></div>
<div class="a" style="left:34.70px;top:193.53px;width:1.50px;height:13.58px;background:#2f6f4f;"></div>
<div class="a" style="left:216.04px;top:192.63px;width:46.11px;height:15.18px;border:1.6px solid #3c7759;box-sizing:border-box;"></div>
<div class="a" style="left:259.75px;top:205.51px;width:2.60px;height:2.60px;background:#2f6f4f;border:0.5px solid #fff;"></div>
<div class="a t" style="left:218.83px;top:195.85px;font-size:10.60px;color:#262626;font-weight:normal;transform:scaleX(0.8206);transform-origin:0 0;">Text</div>
<div class="a" style="left:688.70px;top:166.50px;width:14.30px;height:259.00px;background:#f4f4f4;"></div>
<svg class="a" style="left:694.00px;top:170.50px" width="6.5" height="4.5" viewBox="0 0 6.5 4.5"><path d="M0.3 4.2 L3.25 0.4 L6.2 4.2 Z" fill="#555"/></svg>
<div class="a" style="left:694.30px;top:178.70px;width:5.40px;height:203.00px;background:#757575;border-radius:3px;"></div>
<svg class="a" style="left:694.00px;top:419.80px" width="6.5" height="4.5" viewBox="0 0 6.5 4.5"><path d="M0.3 0.3 L3.25 4.1 L6.2 0.3 Z" fill="#555"/></svg>
<div class="a" style="left:17.80px;top:425.50px;width:685.20px;height:22.50px;background:#f0f0f0;"></div>
<svg class="a" style="left:34.00px;top:432.50px" width="6.5" height="8.5" viewBox="0 0 6.5 8.5"><path d="M5 0.8 L1.3 4.2 L5 7.6" fill="none" stroke="#aaa" stroke-width="0.9"/></svg>
<svg class="a" style="left:57.00px;top:432.50px" width="6.5" height="8.5" viewBox="0 0 6.5 8.5"><path d="M1.3 0.8 L5 4.2 L1.3 7.6" fill="none" stroke="#aaa" stroke-width="0.9"/></svg>
<div class="a" style="left:96.50px;top:427.00px;width:41.00px;height:19.30px;background:#fff;border-radius:0 0 3px 3px;box-shadow:0 0.5px 1px rgba(0,0,0,.12);"></div>
<div class="a t" style="left:101.73px;top:430.92px;font-size:9.86px;color:#2a2a2a;font-weight:bold;transform:scaleX(0.9279);transform-origin:0 0;">Sheet1</div>
<div class="a" style="left:102.00px;top:442.80px;width:30.00px;height:1.60px;background:#5f9177;border-radius:1px;"></div>
<div class="a" style="left:140.30px;top:432.00px;width:1.00px;height:10.00px;background:#c8c8c8;"></div>
<div class="a" style="left:169.90px;top:435.70px;width:8.40px;height:0.90px;background:#555;"></div>
<div class="a" style="left:173.65px;top:431.90px;width:0.90px;height:8.40px;background:#555;"></div>
<div class="a" style="left:431.40px;top:433.45px;width:1.70px;height:1.70px;background:#555;border-radius:50%;"></div>
<div class="a" style="left:431.40px;top:436.85px;width:1.70px;height:1.70px;background:#555;border-radius:50%;"></div>
<div class="a" style="left:431.40px;top:440.25px;width:1.70px;height:1.70px;background:#555;border-radius:50%;"></div>
<svg class="a" style="left:446.50px;top:433.50px" width="5.5" height="6.5" viewBox="0 0 5.5 6.5"><path d="M5 0.3 V6.2 L0.5 3.25 Z" fill="#555"/></svg>
<div class="a" style="left:455.00px;top:433.70px;width:215.30px;height:6.30px;background:#757575;border-radius:3.2px;"></div>
<svg class="a" style="left:682.50px;top:433.50px" width="5.5" height="6.5" viewBox="0 0 5.5 6.5"><path d="M0.5 0.3 V6.2 L5 3.25 Z" fill="#555"/></svg>
<div class="a" style="left:17.80px;top:448.00px;width:685.20px;height:16.00px;background:#f3f3f3;"></div>
<div class="a t" style="left:25.53px;top:453.97px;font-size:7.74px;color:#3a3a3a;font-weight:normal;transform:scaleX(0.9198);transform-origin:0 0;">Ready</div>
<svg class="a" style="left:55px;top:448px" width="20" height="16" viewBox="55 448 20 16"><path d="M59.6 460.3 V452.8 H68.6 V456" fill="none" stroke="#555" stroke-width="0.9"/><rect x="59.6" y="452.6" width="9" height="1.8" fill="#555"/><path d="M61.4 459.6 V456.4 H63.6" fill="none" stroke="#555" stroke-width="0.8"/><circle cx="66" cy="458.4" r="2.7" fill="#fff" stroke="#555" stroke-width="0.9"/><circle cx="66" cy="458.4" r="1.2" fill="#222"/></svg>
<svg class="a" style="left:404px;top:449px" width="20" height="14" viewBox="404 449 20 14"><rect x="409.4" y="452.6" width="9.2" height="6" fill="#fff" stroke="#555" stroke-width="0.95"/><circle cx="415.7" cy="458.6" r="2.3" fill="#555"/><path d="M415.7 455.6 V461.6 M412.7 458.6 H418.7 M413.6 456.5 L417.8 460.7 M417.8 456.5 L413.6 460.7" stroke="#555" stroke-width="0.9"/><circle cx="415.7" cy="458.6" r="0.9" fill="#fff"/></svg>
<div class="a t" style="left:419.81px;top:452.96px;font-size:7.95px;color:#333;font-weight:normal;transform:scaleX(0.9236);transform-origin:0 0;">Display Settings</div>
<div class="a" style="left:486.20px;top:448.00px;width:28.20px;height:15.50px;background:#dedede;"></div>
<svg class="a" style="left:494.80px;top:452.00px" width="10" height="9.5" viewBox="0 0 10 9.5"><rect x="0.5" y="0.5" width="9" height="8.5" fill="none" stroke="#555" stroke-width="0.9"/><path d="M3.5 0.5 V9 M6.5 0.5 V9 M0.5 3.3 H9.5 M0.5 6.2 H9.5" stroke="#555" stroke-width="0.8"/></svg>
<svg class="a" style="left:518px;top:449px" width="48" height="14" viewBox="518 449 48 14"><rect x="523.7" y="452.4" width="9.6" height="8.4" fill="none" stroke="#555" stroke-width="0.9"/><rect x="524.2" y="452.9" width="1.8" height="7.4" fill="#9a9a9a"/><rect x="531" y="452.9" width="1.8" height="7.4" fill="#9a9a9a"/><rect x="527.2" y="455.2" width="2.6" height="2.8" fill="none" stroke="#666" stroke-width="0.8"/><rect x="528.1" y="456.2" width="0.9" height="0.9" fill="#444"/></svg>
<svg class="a" style="left:518px;top:449px" width="48" height="14" viewBox="518 449 48 14"><rect x="552.7" y="452.4" width="8.6" height="8.4" fill="none" stroke="#555" stroke-width="0.9"/><path d="M552.7 458.3 H558.4 V452.4 M555 452.4 V455.4" fill="none" stroke="#555" stroke-width="0.9"/></svg>
<div class="a" style="left:575.00px;top:456.30px;width:5.00px;height:0.90px;background:#555;"></div>
<div class="a" style="left:584.00px;top:456.40px;width:70.40px;height:0.80px;background:#a8a8a8;"></div>
<div class="a" style="left:617.80px;top:452.90px;width:3.30px;height:7.50px;background:#555;border-radius:0.5px;"></div>
<div class="a" style="left:657.80px;top:456.30px;width:5.50px;height:0.90px;background:#555;"></div>
<div class="a" style="left:660.10px;top:453.90px;width:0.90px;height:5.50px;background:#555;"></div>
<div class="a t" style="left:672.36px;top:453.27px;font-size:7.74px;color:#444;font-weight:normal;transform:scaleX(0.9389);transform-origin:0 0;">100%</div>
</body></html>
